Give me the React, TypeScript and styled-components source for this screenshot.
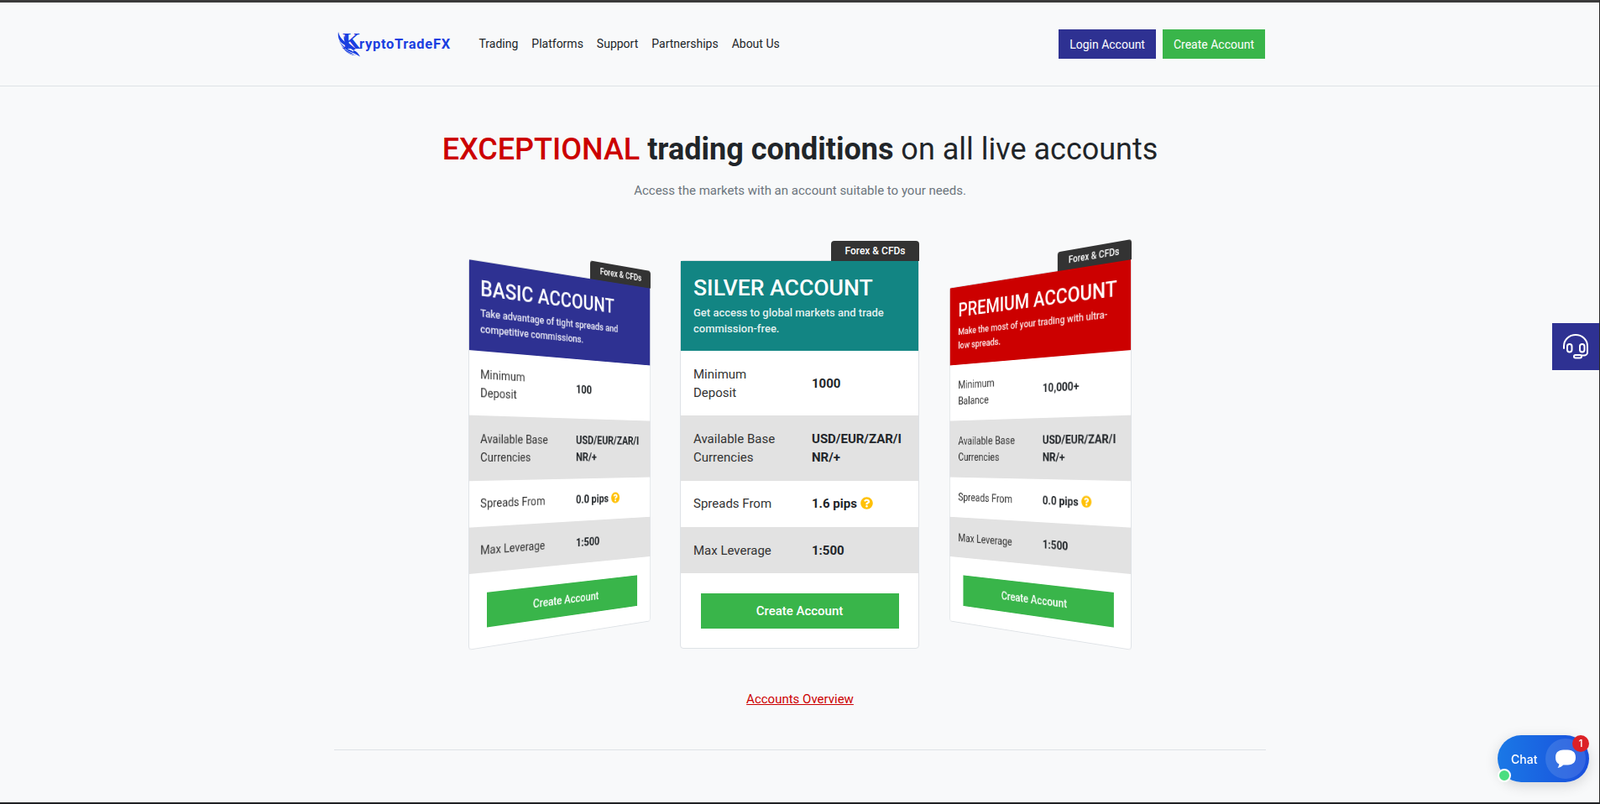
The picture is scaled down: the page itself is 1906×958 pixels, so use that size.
import React from 'react';
import styled, { createGlobalStyle } from 'styled-components';
import { FaQuestionCircle } from 'react-icons/fa';

const BLUE = '#2e3192';
const GREEN = '#39b54a';
const RED = '#cc0000';
const TEAL = '#128583';
const LOGO_BLUE = '#1a3fe0';

type Tilt = 'left' | 'none' | 'right';

interface AccountRow {
  label: string;
  value: string;
  hint?: boolean;
}

interface Account {
  title: string;
  desc: string;
  color: string;
  tilt: Tilt;
  rows: AccountRow[];
}

const accounts: Account[] = [
  {
    title: 'BASIC ACCOUNT',
    desc: 'Take advantage of tight spreads and competitive commissions.',
    color: BLUE,
    tilt: 'left',
    rows: [
      { label: 'Minimum Deposit', value: '100' },
      { label: 'Available Base Currencies', value: 'USD/EUR/ZAR/INR/+' },
      { label: 'Spreads From', value: '0.0 pips', hint: true },
      { label: 'Max Leverage', value: '1:500' },
    ],
  },
  {
    title: 'SILVER ACCOUNT',
    desc: 'Get access to global markets and trade commission-free.',
    color: TEAL,
    tilt: 'none',
    rows: [
      { label: 'Minimum Deposit', value: '1000' },
      { label: 'Available Base Currencies', value: 'USD/EUR/ZAR/INR/+' },
      { label: 'Spreads From', value: '1.6 pips', hint: true },
      { label: 'Max Leverage', value: '1:500' },
    ],
  },
  {
    title: 'PREMIUM ACCOUNT',
    desc: 'Make the most of your trading with ultra-low spreads.',
    color: RED,
    tilt: 'right',
    rows: [
      { label: 'Minimum Balance', value: '10,000+' },
      { label: 'Available Base Currencies', value: 'USD/EUR/ZAR/INR/+' },
      { label: 'Spreads From', value: '0.0 pips', hint: true },
      { label: 'Max Leverage', value: '1:500' },
    ],
  },
];

const navItems = ['Trading', 'Platforms', 'Support', 'Partnerships', 'About Us'];

const App = () => {
  return (
    <>
      <GlobalStyle />
      <WindowTop />
      <Header>
        <HeaderInner>
          <Logo>
            <LogoMark>
              <svg width="36" height="30" viewBox="0 0 36 30" fill={LOGO_BLUE}>
                <path d="M1 0C0 6 2 11 6 14C10 17 15 19 19 22L22 20C16 16 10 11 8 4C7 8 8 10 9 12C5 9 2 5 1 0Z" />
                <path d="M1 8C3 14 9 19 15 21.500C18 22.800 20 24 21 25.500C15 24.500 5 20 1 8Z" />
                <path d="M4 15.500C8 21 14 24 20 26.500C14 26 8 23 4 15.500Z" />
                <path d="M9 22C13 25.500 18 28 23 28C18 28.500 13 26.500 9 22Z" />
                <path d="M19 22C23 23 25 26 27 29.500C24 28 21 26 19 25Z" />
              </svg>
              <LogoK>K</LogoK>
            </LogoMark>
            <LogoText>ryptoTradeFX</LogoText>
          </Logo>
          <Nav>
            {navItems.map((item) => (
              <NavLink key={item}>{item}</NavLink>
            ))}
          </Nav>
          <HeaderButtons>
            <HeaderButton $bg={BLUE}>Login Account</HeaderButton>
            <HeaderButton $bg={GREEN}>Create Account</HeaderButton>
          </HeaderButtons>
        </HeaderInner>
      </Header>

      <Main>
        <Title>
          <TitleRed>EXCEPTIONAL</TitleRed> <strong>trading conditions</strong> on all live accounts
        </Title>
        <Subtitle>Access the markets with an account suitable to your needs.</Subtitle>

        <CardsRow>
          {accounts.map((account) => (
            <CardSlot key={account.title} $tilt={account.tilt}>
              <Card $tilt={account.tilt}>
                <Tag>Forex &amp; CFDs</Tag>
                <CardHead $bg={account.color}>
                  <CardTitle>{account.title}</CardTitle>
                  <CardDesc>{account.desc}</CardDesc>
                </CardHead>
                {account.rows.map((row, i) => (
                  <Row key={row.label} $shaded={i % 2 === 1}>
                    <RowLabel>{row.label}</RowLabel>
                    <RowValue>
                      {row.value}
                      {row.hint && (
                        <HintIcon>
                          <FaQuestionCircle size={15} color="#ffc107" />
                        </HintIcon>
                      )}
                    </RowValue>
                  </Row>
                ))}
                <CardFoot>
                  <CardButton>Create Account</CardButton>
                </CardFoot>
              </Card>
            </CardSlot>
          ))}
        </CardsRow>

        <Overview>Accounts Overview</Overview>
        <Divider />
      </Main>

      <SupportTab>
        <svg width="30" height="30" viewBox="0 0 30 30" fill="none" stroke="#fff" strokeWidth="2" strokeLinecap="round">
          <path d="M1 17V14.500C1 6.500 7.500 1 15 1C22.500 1 29 6.500 29 14.500V22C29 24 27 25.500 25 25.500H22" />
          <rect x="5" y="12" width="5.500" height="9.500" rx="2.700" />
          <rect x="20" y="12" width="5.500" height="9.500" rx="2.700" />
          <rect x="13" y="25" width="9" height="3.500" rx="1.700" />
        </svg>
      </SupportTab>

      <ChatWidget>
        <ChatLabel>Chat</ChatLabel>
        <ChatCircle>
          <svg width="24" height="23" viewBox="0 0 24 23" fill="#fff">
            <path d="M12 0.500C19 0.500 24 2 24 9.500C24 17 19 18.500 12 18.500C11 18.500 10 18.500 9.200 18.400C7.500 20 5.500 21.500 2.500 22C3.500 20.500 4.200 19 4.300 17.500C1.300 16 0 13.500 0 9.500C0 2 5 0.500 12 0.500Z" />
          </svg>
        </ChatCircle>
        <ChatBadge>1</ChatBadge>
        <ChatOnline />
      </ChatWidget>

      <WindowRight />
      <WindowBottom />
    </>
  );
};

export default App;

const GlobalStyle = createGlobalStyle`
  html, body {
    margin: 0;
    height: 100%;
    overflow: hidden;
    background: #f8f9fa;
  }
  body {
    font-family: Roboto, "Liberation Sans", sans-serif;
    color: #212529;
  }
  * {
    box-sizing: border-box;
  }
`;

const WindowTop = styled.div`
  height: 3px;
  background: #3a3a3a;
`;

const WindowRight = styled.div`
  position: fixed;
  top: 0;
  right: 0;
  bottom: 0;
  width: 1px;
  background: #2a2a2a;
`;

const WindowBottom = styled.div`
  position: fixed;
  left: 0;
  right: 0;
  bottom: 0;
  height: 2px;
  background: #202124;
`;

const Header = styled.header`
  height: 100px;
  border-bottom: 1px solid #dee2e6;
`;

const HeaderInner = styled.div`
  width: 1110px;
  height: 99px;
  margin: 0 auto;
  display: flex;
  align-items: center;
  padding: 0 1px 0 4px;
`;

const Logo = styled.div`
  display: flex;
  align-items: flex-end;
  width: 139px;
  color: ${LOGO_BLUE};
`;

const LogoMark = styled.div`
  position: relative;
  width: 26px;
  height: 30px;
  flex: none;
`;

const LogoK = styled.span`
  position: absolute;
  left: 6px;
  top: -3px;
  font: 700 28px/1 "Liberation Serif", serif;
`;

const LogoText = styled.span`
  font: 700 16.5px/20px Roboto, sans-serif;
  letter-spacing: 0.7px;
  margin-bottom: 5px;
`;

const Nav = styled.nav`
  display: flex;
  gap: 16px;
  margin-left: 29.5px;
`;

const NavLink = styled.a`
  font-size: 14px;
  line-height: 21px;
  color: #212529;
`;

const HeaderButtons = styled.div`
  display: flex;
  gap: 8px;
  margin-left: auto;
`;

const HeaderButton = styled.a<{ $bg: string }>`
  height: 35px;
  padding: 0 13px;
  display: flex;
  align-items: center;
  font-size: 14px;
  color: #fff;
  background: ${(p) => p.$bg};
`;

const Main = styled.main`
  width: 1110px;
  margin: 0 auto;
  display: flex;
  flex-direction: column;
  align-items: center;
`;

const Title = styled.h1`
  margin: 54px 0 0;
  font-size: 36px;
  line-height: 43px;
  font-weight: 400;
  color: #212529;
`;

const TitleRed = styled.span`
  color: ${RED};
  font-weight: 500;
`;

const Subtitle = styled.p`
  margin: 15px 0 0;
  font-size: 15px;
  line-height: 24px;
  color: #6c757d;
`;

const CardsRow = styled.div`
  margin-top: 71px;
  display: flex;
  gap: 36px;
`;

const slotWidths: Record<Tilt, string> = {
  left: '216px',
  none: '285px',
  right: '217px',
};

const CardSlot = styled.div<{ $tilt: Tilt }>`
  width: ${(p) => slotWidths[p.$tilt]};
  display: flex;
  justify-content: ${(p) => (p.$tilt === 'right' ? 'flex-end' : 'flex-start')};
`;

const tiltStyles: Record<Tilt, string> = {
  none: '',
  left: 'transform-origin: left center; transform: perspective(760px) rotateY(27.5deg) scale(1.008);',
  right: 'transform-origin: right center; transform: perspective(760px) rotateY(-27.5deg) scale(1.008);',
};

const Card = styled.div<{ $tilt: Tilt }>`
  position: relative;
  flex: none;
  width: 285px;
  height: 463px;
  background: #fff;
  border: 1px solid #dee2e6;
  border-radius: 4px;
  ${(p) => tiltStyles[p.$tilt]}
`;

const Tag = styled.div`
  position: absolute;
  right: -1px;
  bottom: 100%;
  width: 105px;
  height: 24px;
  background: #333;
  color: #fff;
  font-size: 12px;
  font-weight: 500;
  line-height: 24px;
  text-align: center;
  border-radius: 4px 4px 0 0;
`;

const CardHead = styled.div<{ $bg: string }>`
  height: 107px;
  padding: 15px 15px 0;
  background: ${(p) => p.$bg};
  color: #fff;
`;

const CardTitle = styled.div`
  font-size: 26.6px;
  line-height: 33px;
  font-weight: 500;
  white-space: nowrap;
`;

const CardDesc = styled.div`
  margin-top: 4px;
  font-size: 13px;
  line-height: 19px;
  font-weight: 500;
  color: rgba(255, 255, 255, 0.9);
`;

const Row = styled.div<{ $shaded: boolean }>`
  display: grid;
  grid-template-columns: 141px 1fr;
  align-items: center;
  padding: 16.5px 15px;
  color: #333;
  background: ${(p) => (p.$shaded ? '#e2e2e2' : 'transparent')};
`;

const RowLabel = styled.div`
  font-size: 15px;
  line-height: 22.2px;
  padding-right: 36px;
`;

const RowValue = styled.div`
  font-size: 15px;
  line-height: 22.2px;
  font-weight: 700;
  word-break: break-all;
  color: #212529;
`;

const HintIcon = styled.span`
  display: inline-block;
  height: 15px;
  margin-left: 4px;
  line-height: 15px;
  vertical-align: -2px;
`;

const CardFoot = styled.div`
  padding: 24px 23.5px;
`;

const CardButton = styled.a`
  display: block;
  height: 42px;
  background: ${GREEN};
  color: #fff;
  font-size: 15px;
  font-weight: 500;
  line-height: 42px;
  text-align: center;
`;

const Overview = styled.a`
  margin-top: 48px;
  font-size: 15px;
  line-height: 24px;
  color: ${RED};
  text-decoration: underline;
`;

const Divider = styled.hr`
  width: 100%;
  margin: 48px 0 0;
  border: 0;
  border-top: 1px solid #dee2e6;
`;

const SupportTab = styled.div`
  position: fixed;
  right: 1px;
  top: 385px;
  width: 56px;
  height: 56px;
  background: ${BLUE};
  display: flex;
  align-items: center;
  justify-content: center;
`;

const ChatWidget = styled.div`
  position: fixed;
  left: 1784px;
  top: 876px;
  width: 109px;
  height: 56px;
  border-radius: 28px;
  background: linear-gradient(90deg, #1a78e6, #1a4fdc);
  box-shadow: 0 4px 16px rgba(0, 0, 0, 0.15);
  display: flex;
  align-items: center;
  justify-content: space-between;
  padding: 0 4px 0 16px;
`;

const ChatLabel = styled.span`
  font: 500 14px Inter, Roboto, sans-serif;
  color: #fff;
`;

const ChatCircle = styled.div`
  width: 48px;
  height: 48px;
  border-radius: 50%;
  background: rgba(255, 255, 255, 0.12);
  display: flex;
  align-items: center;
  justify-content: center;
`;

const ChatBadge = styled.span`
  position: absolute;
  top: 0;
  right: 0;
  width: 20px;
  height: 20px;
  border-radius: 50%;
  background: #dc2126;
  color: #fff;
  font: 500 12px/20px Inter, Roboto, sans-serif;
  text-align: center;
`;

const ChatOnline = styled.span`
  position: absolute;
  left: 0;
  bottom: 0;
  width: 16px;
  height: 16px;
  border-radius: 50%;
  background: #4ade80;
  border: 2px solid #fff;
`;
